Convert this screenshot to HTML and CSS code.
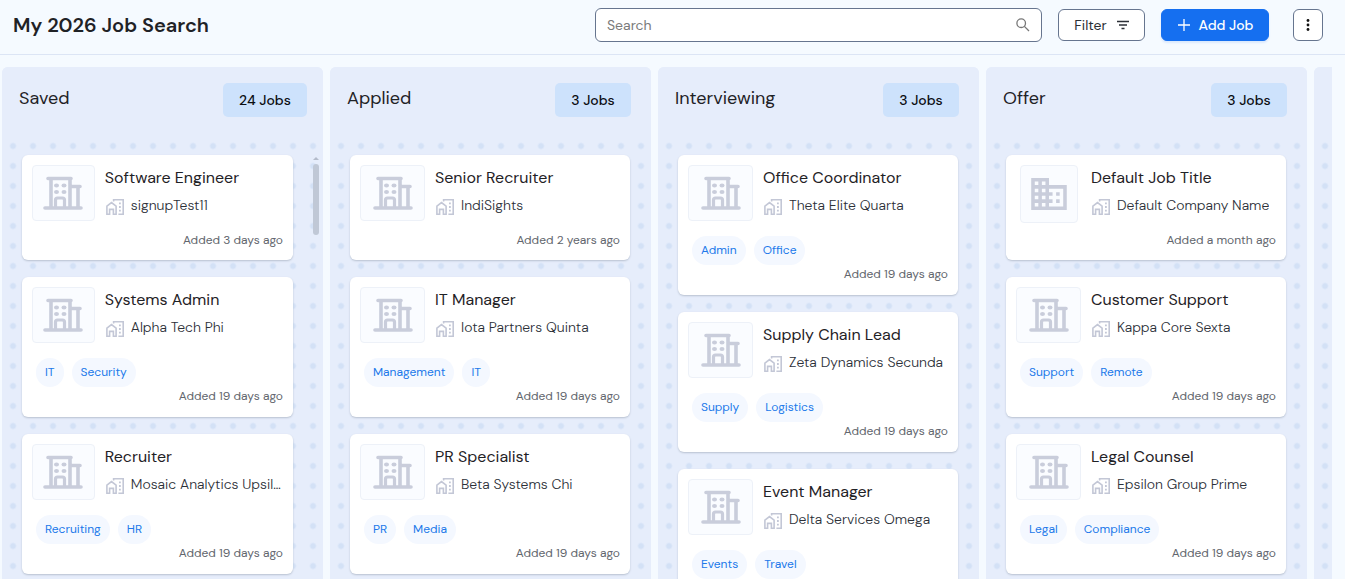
FILE: index.html
```html
<!DOCTYPE html>
<html lang="en">
<head>
    <meta charset="UTF-8">
    <meta name="viewport" content="width=device-width, initial-scale=1">
    <title>My 2026 Job Search</title>
    <link rel="stylesheet" href="styles.css">
</head>
<body>
<!-- shared icons -->
<svg class="sprite" aria-hidden="true">
    <symbol id="office" viewBox="0 0 40 34">
        <path d="M5 2.5H28M8 2.5V32M27 2.5V32M29 10.5H37M35 10.5V32M2 32H38" fill="none" stroke="currentColor" stroke-width="3.6" stroke-linecap="round"/>
        <path d="M12.5 32V24a2 2 0 0 1 2-2H19.5a2 2 0 0 1 2 2V32" fill="none" stroke="currentColor" stroke-width="3.2"/>
        <ellipse cx="13.5" cy="9.6" rx="2.5" ry="2" fill="currentColor"/>
        <ellipse cx="21" cy="9.6" rx="2.5" ry="2" fill="currentColor"/>
        <ellipse cx="13.5" cy="16" rx="2.5" ry="2" fill="currentColor"/>
        <ellipse cx="21" cy="16" rx="2.5" ry="2" fill="currentColor"/>
    </symbol>
    <symbol id="business" viewBox="2 3 20 18">
        <path fill="currentColor" d="M12 7V3H2v18h20V7H12zM6 19H4v-2h2v2zm0-4H4v-2h2v2zm0-4H4V9h2v2zm0-4H4V5h2v2zm4 12H8v-2h2v2zm0-4H8v-2h2v2zm0-4H8V9h2v2zm0-4H8V5h2v2zm10 12h-8v-2h2v-2h-2v-2h2v-2h-2V9h8v10zm-2-8h-2v2h2v-2zm0 4h-2v2h2v-2z"/>
    </symbol>
    <symbol id="company" viewBox="0 0 20 18">
        <path d="M1.9 16.2V8.2L6.5 4.6L11.1 8.2V16.2H8.4V11.4H4.6V16.2Z" fill="none" stroke="currentColor" stroke-width="1.6"/>
        <path d="M8.6 3.4V1.8H18.2V16.2H13.4" fill="none" stroke="currentColor" stroke-width="1.6"/>
        <path d="M14 4.4h1.8v1.8H14zM14 8.1h1.8v1.8H14zM14 11.8h1.8v1.8H14z" fill="currentColor"/>
    </symbol>
</svg>

<header class="topbar">
    <h1 class="board-name">My 2026 Job Search</h1>
    <form class="search">
        <input class="search-input" type="search" placeholder="Search" aria-label="Search">
        <button class="search-btn" type="button" aria-label="Run search">
            <svg width="14" height="14" viewBox="0 0 14 14" fill="none" stroke="currentColor" stroke-width="1.3"><circle cx="5.2" cy="5.2" r="4.3"/><path d="M8.4 8.4L13 13"/></svg>
        </button>
    </form>
    <button class="btn filter" type="button">Filter
        <svg width="12" height="10" viewBox="0 0 12 10" stroke="currentColor" stroke-width="1.3"><path d="M0 1.5H12M2 5H10M4.5 8.5H7.5"/></svg>
    </button>
    <button class="btn add" type="button">
        <svg width="14" height="14" viewBox="0 0 14 14" stroke="currentColor" stroke-width="1.3"><path d="M7 1V13M1 7H13"/></svg>
        Add Job
    </button>
    <button class="btn more" type="button" aria-label="More options">
        <svg width="4" height="14" viewBox="0 0 4 14" fill="currentColor"><circle cx="2" cy="2.5" r="1.4"/><circle cx="2" cy="7" r="1.4"/><circle cx="2" cy="11.5" r="1.4"/></svg>
    </button>
</header>

<main class="board">
    <section class="column scrolled">
        <div class="column-head"><h2 class="column-name">Saved</h2><div class="count-cell"><span class="count">24 Jobs</span></div></div>
        <div class="cards">
            <article class="card">
                <div class="info">
                    <div class="logo"><span class="logo-box"><svg class="office"><use href="#office"/></svg></span></div>
                    <div class="text">
                        <h3 class="job">Software Engineer</h3>
                        <p class="company"><svg class="company-icon"><use href="#company"/></svg><span class="company-name">signupTest11</span></p>
                    </div>
                </div>
                <p class="added">Added 3 days ago</p>
            </article>
            <article class="card">
                <div class="info">
                    <div class="logo"><span class="logo-box"><svg class="office"><use href="#office"/></svg></span></div>
                    <div class="text">
                        <h3 class="job">Systems Admin</h3>
                        <p class="company"><svg class="company-icon"><use href="#company"/></svg><span class="company-name">Alpha Tech Phi</span></p>
                    </div>
                </div>
                <div class="tags"><span class="tag">IT</span><span class="tag">Security</span></div>
                <p class="added">Added 19 days ago</p>
            </article>
            <article class="card">
                <div class="info">
                    <div class="logo"><span class="logo-box"><svg class="office"><use href="#office"/></svg></span></div>
                    <div class="text">
                        <h3 class="job">Recruiter</h3>
                        <p class="company"><svg class="company-icon"><use href="#company"/></svg><span class="company-name">Mosaic Analytics Upsilon</span></p>
                    </div>
                </div>
                <div class="tags"><span class="tag">Recruiting</span><span class="tag">HR</span></div>
                <p class="added">Added 19 days ago</p>
            </article>
        </div>
        <div class="scrollbar" aria-hidden="true"><span class="scroll-up"></span><span class="scroll-thumb"></span></div>
    </section>

    <section class="column">
        <div class="column-head"><h2 class="column-name">Applied</h2><div class="count-cell"><span class="count">3 Jobs</span></div></div>
        <div class="cards">
            <article class="card">
                <div class="info">
                    <div class="logo"><span class="logo-box"><svg class="office"><use href="#office"/></svg></span></div>
                    <div class="text">
                        <h3 class="job">Senior Recruiter</h3>
                        <p class="company"><svg class="company-icon"><use href="#company"/></svg><span class="company-name">IndiSights</span></p>
                    </div>
                </div>
                <p class="added">Added 2 years ago</p>
            </article>
            <article class="card">
                <div class="info">
                    <div class="logo"><span class="logo-box"><svg class="office"><use href="#office"/></svg></span></div>
                    <div class="text">
                        <h3 class="job">IT Manager</h3>
                        <p class="company"><svg class="company-icon"><use href="#company"/></svg><span class="company-name">Iota Partners Quinta</span></p>
                    </div>
                </div>
                <div class="tags"><span class="tag">Management</span><span class="tag">IT</span></div>
                <p class="added">Added 19 days ago</p>
            </article>
            <article class="card">
                <div class="info">
                    <div class="logo"><span class="logo-box"><svg class="office"><use href="#office"/></svg></span></div>
                    <div class="text">
                        <h3 class="job">PR Specialist</h3>
                        <p class="company"><svg class="company-icon"><use href="#company"/></svg><span class="company-name">Beta Systems Chi</span></p>
                    </div>
                </div>
                <div class="tags"><span class="tag">PR</span><span class="tag">Media</span></div>
                <p class="added">Added 19 days ago</p>
            </article>
        </div>
    </section>

    <section class="column">
        <div class="column-head"><h2 class="column-name">Interviewing</h2><div class="count-cell"><span class="count">3 Jobs</span></div></div>
        <div class="cards">
            <article class="card">
                <div class="info">
                    <div class="logo"><span class="logo-box"><svg class="office"><use href="#office"/></svg></span></div>
                    <div class="text">
                        <h3 class="job">Office Coordinator</h3>
                        <p class="company"><svg class="company-icon"><use href="#company"/></svg><span class="company-name">Theta Elite Quarta</span></p>
                    </div>
                </div>
                <div class="tags"><span class="tag">Admin</span><span class="tag">Office</span></div>
                <p class="added">Added 19 days ago</p>
            </article>
            <article class="card">
                <div class="info">
                    <div class="logo"><span class="logo-box"><svg class="office"><use href="#office"/></svg></span></div>
                    <div class="text">
                        <h3 class="job">Supply Chain Lead</h3>
                        <p class="company"><svg class="company-icon"><use href="#company"/></svg><span class="company-name">Zeta Dynamics Secunda</span></p>
                    </div>
                </div>
                <div class="tags"><span class="tag">Supply</span><span class="tag">Logistics</span></div>
                <p class="added">Added 19 days ago</p>
            </article>
            <article class="card">
                <div class="info">
                    <div class="logo"><span class="logo-box"><svg class="office"><use href="#office"/></svg></span></div>
                    <div class="text">
                        <h3 class="job">Event Manager</h3>
                        <p class="company"><svg class="company-icon"><use href="#company"/></svg><span class="company-name">Delta Services Omega</span></p>
                    </div>
                </div>
                <div class="tags"><span class="tag">Events</span><span class="tag">Travel</span></div>
            </article>
        </div>
    </section>

    <section class="column">
        <div class="column-head"><h2 class="column-name">Offer</h2><div class="count-cell"><span class="count">3 Jobs</span></div></div>
        <div class="cards">
            <article class="card">
                <div class="info">
                    <div class="logo"><span class="logo-box square"><svg class="business"><use href="#business"/></svg></span></div>
                    <div class="text">
                        <h3 class="job">Default Job Title</h3>
                        <p class="company"><svg class="company-icon"><use href="#company"/></svg><span class="company-name">Default Company Name</span></p>
                    </div>
                </div>
                <p class="added">Added a month ago</p>
            </article>
            <article class="card">
                <div class="info">
                    <div class="logo"><span class="logo-box"><svg class="office"><use href="#office"/></svg></span></div>
                    <div class="text">
                        <h3 class="job">Customer Support</h3>
                        <p class="company"><svg class="company-icon"><use href="#company"/></svg><span class="company-name">Kappa Core Sexta</span></p>
                    </div>
                </div>
                <div class="tags"><span class="tag">Support</span><span class="tag">Remote</span></div>
                <p class="added">Added 19 days ago</p>
            </article>
            <article class="card">
                <div class="info">
                    <div class="logo"><span class="logo-box"><svg class="office"><use href="#office"/></svg></span></div>
                    <div class="text">
                        <h3 class="job">Legal Counsel</h3>
                        <p class="company"><svg class="company-icon"><use href="#company"/></svg><span class="company-name">Epsilon Group Prime</span></p>
                    </div>
                </div>
                <div class="tags"><span class="tag">Legal</span><span class="tag">Compliance</span></div>
                <p class="added">Added 19 days ago</p>
            </article>
        </div>
    </section>

    <section class="column">
        <div class="column-head"></div>
    </section>
</main>
</body>
</html>
```
FILE: styles.css
```css
*{
    margin: 0;
    padding: 0;
    box-sizing: border-box;
}
body{
    height: 100vh;
    display: flex;
    flex-direction: column;
    overflow: hidden;
    background-color: #f5faff;
    color: #1f2226;
    font-family: "DM Sans", Inter, "Liberation Sans", sans-serif;
    font-size: 14px;
}
button, input{
    font: inherit;
}
.sprite{
    display: none;
}

/* top bar */
.topbar{
    flex: none;
    display: flex;
    align-items: center;
    height: 55px;
    padding: 0 22px 4px 13px;
    border-bottom: 1px solid #dce5f5;
}
.board-name{
    flex: 1;
    font-size: 20px;
    font-weight: 600;
    white-space: nowrap;
}
.search{
    flex: 0 1 447px;
    display: flex;
    align-items: center;
    height: 34px;
    padding: 0 11px;
    border: 1px solid #66758f;
    border-radius: 6px;
    background-color: #fff;
}
.search-input{
    flex: 1;
    min-width: 0;
    border: none;
    outline: none;
    background: none;
}
.search-input::placeholder{
    color: #7b7b7b;
}
.search-btn{
    display: flex;
    border: none;
    background: none;
    color: #777;
}
.btn{
    display: flex;
    align-items: center;
    justify-content: center;
    height: 32px;
    margin-left: 16px;
    border: 1px solid #66758f;
    border-radius: 6px;
    background-color: #fff;
    color: #2b2f36;
    white-space: nowrap;
}
.filter{
    width: 87px;
    gap: 10px;
}
.add{
    width: 108px;
    gap: 8px;
    border-color: #156ff0;
    background-color: #156ff0;
    color: #fff;
    font-weight: 500;
    box-shadow: 0 2px 2px #dbe9fd;
}
.more{
    width: 30px;
    margin-left: 24px;
    color: #111;
}

/* board */
.board{
    flex: 1;
    min-height: 0;
    display: flex;
    gap: 7px;
    margin: 12px 13px 0 2px;
    overflow: hidden;
}
.column{
    position: relative;
    flex: 0 0 321px;
    border-radius: 6px 6px 0 0;
    background-color: #e6edfb;
    background-image: radial-gradient(circle at 50% 50%, #d3e1f6 2px, transparent 4px);
    background-size: 20px 20px;
    background-position: 1px 9px;
}
.column-head{
    display: grid;
    grid-template-columns: 1fr 116px;
    align-items: start;
    height: 68px;
    padding: 16px 0 0 17px;
    border-radius: 6px 6px 0 0;
    background-color: #e6edfb;
}
.column-name{
    padding-top: 4px;
    font-size: 18px;
    line-height: 22px;
    font-weight: 400;
}
.count-cell{
    text-align: center;
}
.count{
    display: inline-block;
    padding: 0 16px;
    border-radius: 5px;
    background-color: #cde2fc;
    color: #0b0d12;
    line-height: 34px;
    font-weight: 500;
}
.cards{
    display: flex;
    flex-direction: column;
    gap: 17px;
    padding: 20px 21px 0 20px;
}
.scrolled .cards{
    padding-right: 30px;
}
.scrollbar{
    position: absolute;
    top: 88px;
    right: 2px;
    width: 10px;
}
.scroll-up{
    display: block;
    width: 6px;
    margin: 2px auto 4px;
    border: 3px solid transparent;
    border-top: none;
    border-bottom-color: #b4bccb;
}
.scroll-thumb{
    display: block;
    width: 6px;
    height: 71px;
    margin: 0 auto;
    border-radius: 3px;
    background-color: #c0c8d6;
}

/* job card */
.card{
    padding: 10px 10px 11px;
    border-radius: 6px;
    background-color: #fff;
    box-shadow: 0 1px 2px #b8c1d0;
}
.info{
    display: flex;
    height: 66px;
}
.logo{
    flex: 0 0 25%;
    display: flex;
    align-items: flex-start;
    justify-content: center;
    color: #c9cddb;
}
.logo-box{
    display: flex;
    align-items: center;
    justify-content: center;
    width: 100%;
    height: 56px;
    border: 1px solid #edf1f8;
    border-radius: 4px;
    background-color: #fafcff;
}
.square{
    width: 58px;
    height: 58px;
}
.office{
    width: 40px;
    height: 34px;
}
.business{
    width: 36px;
    height: 32px;
}
.text{
    flex: 1;
    min-width: 0;
    padding-left: 10px;
}
.job{
    font-size: 16px;
    line-height: 26px;
    font-weight: 400;
    white-space: nowrap;
}
.company{
    display: flex;
    align-items: flex-start;
    gap: 6px;
    margin-top: 4px;
    line-height: 20px;
    font-weight: 300;
    color: #2c3038;
}
.company-icon{
    flex: none;
    width: 20px;
    height: 18px;
    margin-top: 3px;
    color: #c3c7d6;
}
.company-name{
    overflow: hidden;
    text-overflow: ellipsis;
    white-space: nowrap;
}
.tags{
    display: flex;
    gap: 8px;
    margin: 5px 4px 0;
}
.tag{
    padding: 0 9px;
    border-radius: 15px;
    background-color: #f4f8ff;
    color: #2178ea;
    font-size: 12px;
    line-height: 29px;
}
.added{
    color: #62666d;
    font-size: 12px;
    line-height: 18px;
    text-align: right;
}
.tags + .added{
    padding-bottom: 1px;
}
```
